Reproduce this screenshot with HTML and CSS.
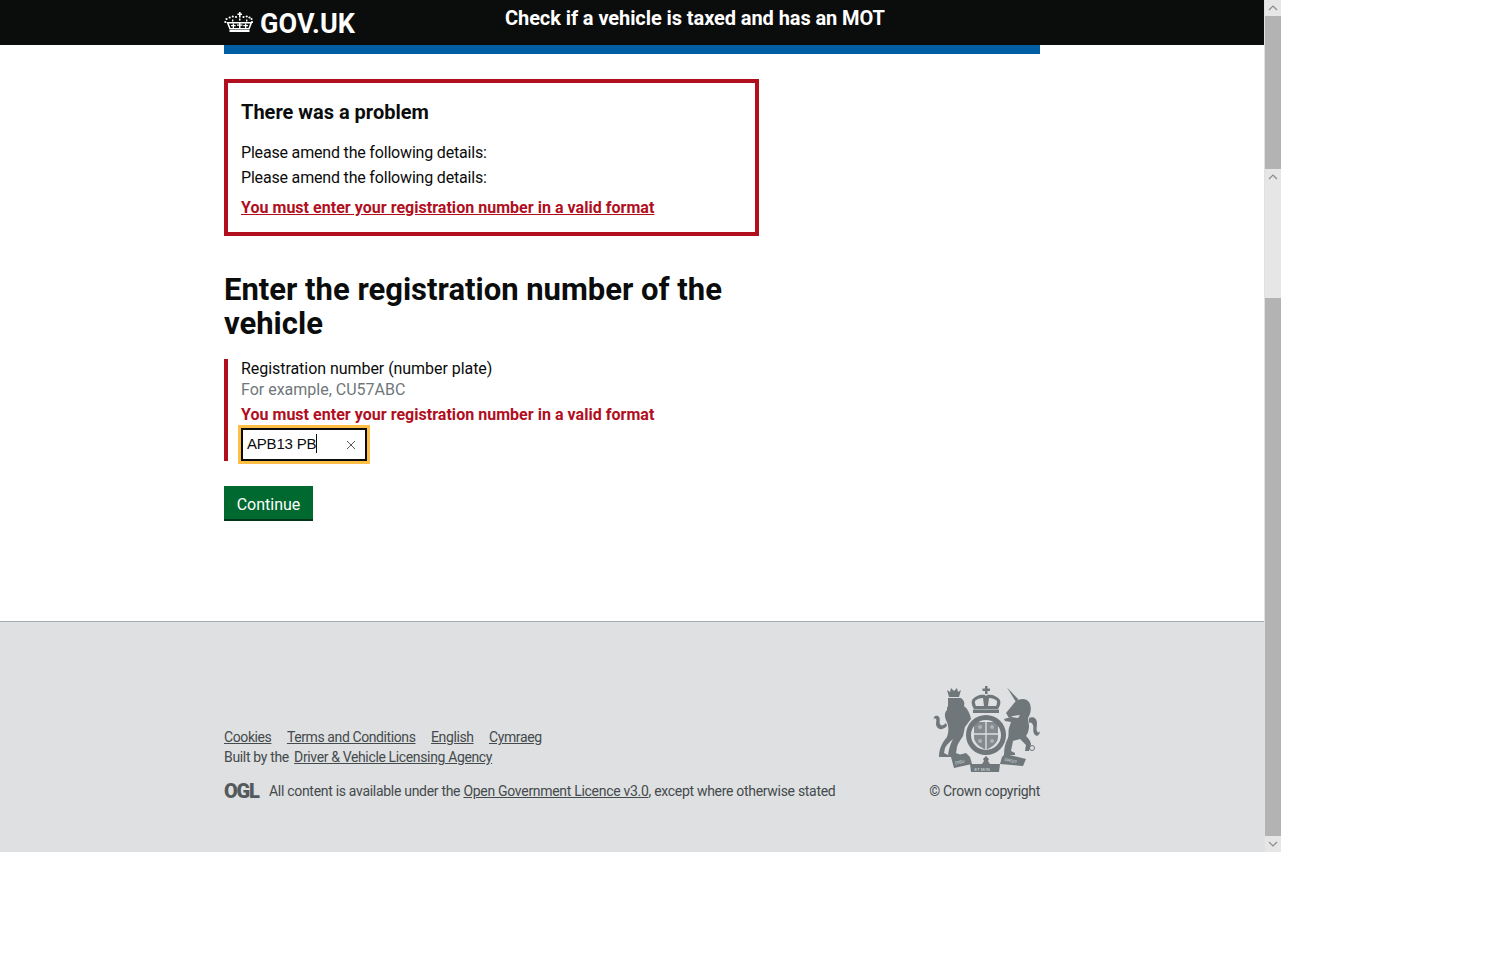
FILE: index.html
```html
<!DOCTYPE html>
<html lang="en">
<head>
<meta charset="utf-8">
<title>Check if a vehicle is taxed and has an MOT</title>
<link rel="stylesheet" href="styles.css">
</head>
<body>
<div class="window">
  <div class="page">
    <header class="site-header">
      <div class="container header-inner">
        <a class="logo" href="#">
          <svg class="crown" viewBox="0 0 29 20" aria-hidden="true">
            <g fill="#fff">
              <path d="M15 0h1.600v1.500H18v1.500h-1.400v2.500H15V3h-1.500V1.500H15z"/>
              <circle cx="12" cy="5" r="1.100"/><circle cx="19.500" cy="5" r="1.100"/>
              <circle cx="8.800" cy="4.500" r="1.100"/><circle cx="22.700" cy="4.500" r="1.100"/>
              <circle cx="5.700" cy="5.500" r="1.100"/><circle cx="25.500" cy="5.500" r="1.100"/>
              <circle cx="2.500" cy="7" r="1.100"/><circle cx="27.500" cy="7" r="1.100"/>
              <circle cx="1.300" cy="10" r="1.100"/><circle cx="28" cy="10" r="1.100"/>
              <path d="M15 6.500h1.500v2h-1.500zM8 7.500h1.400v2H8zM22 7.500h1.400v2H22z"/>
              <path d="M2.500 10h26l-3 7.500H5.500zM4.800 11.400l1.700 4.700h18l1.700-4.700z" fill-rule="evenodd"/>
              <path d="M15 10.500h1.500v2h2v1.300h-2v3h-1.500v-3h-2v-1.300h2zM8.700 11.500h1.300v1.500h1.700v1.200H10v2.500H8.700v-2.500H7V13h1.700zM21 11.500h1.300V13H24v1.200h-1.700v2.500H21v-2.500h-1.700V13H21z"/>
              <path d="M5.500 18h20v2h-20z"/>
            </g>
          </svg>
          <span class="logo-text">GOV.UK</span>
        </a>
        <span class="service-name">Check if a vehicle is taxed and has an MOT</span>
      </div>
    </header>
    <main class="container main">
      <div class="blue-bar"></div>
      <section class="error-summary">
        <h2 class="error-title">There was a problem</h2>
        <p class="error-line">Please amend the following details:</p>
        <p class="error-line">Please amend the following details:</p>
        <a class="error-link" href="#">You must enter your registration number in a valid format</a>
      </section>
      <h1 class="page-title">Enter the registration number of the vehicle</h1>
      <div class="form-group">
        <div class="label">Registration number (number plate)</div>
        <div class="hint">For example, CU57ABC</div>
        <div class="error-message">You must enter your registration number in a valid format</div>
        <div class="input">
          <span class="input-value">APB13 PB</span><span class="caret"></span>
          <svg class="clear" viewBox="0 0 10 10" aria-hidden="true"><path d="M1 1l8 8M9 1l-8 8" stroke="#54595c" stroke-width="1" fill="none"/></svg>
        </div>
      </div>
      <button class="button" type="button">Continue</button>
    </main>
    <footer class="site-footer">
      <div class="container footer-inner">
        <div class="footer-meta">
          <ul class="footer-links">
            <li><a href="#">Cookies</a></li>
            <li><a href="#">Terms and Conditions</a></li>
            <li><a href="#">English</a></li>
            <li><a href="#">Cymraeg</a></li>
          </ul>
          <div class="built-by">Built by the <a href="#">Driver &amp; Vehicle Licensing Agency</a></div>
          <div class="licence">
            <span class="ogl">OGL</span>
            <span>All content is available under the <a href="#">Open Government Licence v3.0</a>, except where otherwise stated</span>
          </div>
        </div>
        <div class="copyright">
          <svg class="crest" viewBox="0 0 107 90" aria-hidden="true">
            <g class="crest-fill">
              <path d="M52 1h2.500v2.500H57V6h-2.500v3H52V6h-2.500V3.500H52z"/>
              <path fill-rule="evenodd" d="M39 15c3-4 8-6 13-5l1 1 1-1c5-1 10 1 13 5 1 3 0 6-2 9H41c-2-3-3-6-2-9zm3 1c0 2 0 3 1 5h8l-1-8c-3 0-6 1-8 3zm14-3l-1 8h8c1-2 1-3 1-5-2-2-5-3-8-3z"/>
              <path d="M40 24.500h26V28H40z"/>
              <path d="M16 12l-2-7 3 2 1-4 3 3 3-3 1 4 3-2-2 7z"/>
              <path d="M15 13h13c3 2 4 5 3 8 4 3 6 8 7 13l-6 8-2 9c-3 5-5 7-6 11l-1 6 5 2v2H15c0-6 2-12 5-18-3 3-6 5-8 9l-1 5 4 2v2H6c0-8 3-14 8-20 2-6 2-11-1-17-2-5-1-8 1-10 0-2 0-3 1-4z"/>
              <path d="M14 41c-4 4-8 4-10 1-2-3 0-6-1-8-1-1-2-1-2 1-1-4 2-5 4-4 3 2 1 6 2 8 1 2 3 2 6-1z"/>
              <path d="M74 2.500l11.500 12-2.500 2.500z"/>
              <path fill-rule="evenodd" d="M82 17c5-4 11-4 14 0 3 5 2 11-1 16l1 8c0 4-1 7-3 10 2 2 4 4 5 8l-2 7h-4l1-6-6-6-7 2-2 10 4 2v2H71c0-6 1-12 4-17 1-4 0-7 1-10l2-6-6-1-1-2 7-2 7 1 2-3-7 1-4 2-3-5z"/>
              <path d="M96 33c5-2 8 1 8 5s-1 6 0 8 2 2 3 0c0 4-3 6-5 4-3-3-1-7-2-10-1-2-2-3-4-2z"/>
            </g>
            <circle class="crest-line" cx="99" cy="63" r="2.500"/>
            <circle class="crest-bg" cx="53" cy="50" r="21"/>
            <g class="crest-fill">
              <path fill-rule="evenodd" d="M53 30a20 20 0 1 1 0 40 20 20 0 0 1 0-40zm0 5a15 15 0 1 0 0 30 15 15 0 0 0 0-30z"/>
              <path d="M41 37h24v15c0 6-6 10-12 13-6-3-12-7-12-13z" opacity=".82"/>
            </g>
            <path class="crest-cut" d="M53 37v28M41 49h24"/>
            <path class="crest-cut thin" d="M47 42h.1M59 42h.1M47 56h.1M59 56h.1"/>
            <g class="crest-fill">
              <path d="M53 71l3 3-1 2 2 3-1 2h-6l-1-2 2-3-1-2z"/>
              <path d="M18 72l15-4 4 4 2 7-18 4z"/>
              <path d="M37 79h30l-1 8H38z"/>
              <path d="M67 79l2-7 3-3 21 5-3 7z"/>
            </g>
            <g class="motto">
              <text x="22.500" y="79.500" transform="rotate(-14 22.500 79.500)">DIEU</text>
              <text x="41.500" y="85.500">ET MON</text>
              <text x="71.500" y="75.500" transform="rotate(14 71.500 75.500)">DROIT</text>
            </g>
          </svg>
          <span class="copyright-text">© Crown copyright</span>
        </div>
      </div>
    </footer>
  </div>
  <div class="scrollbars">
    <div class="sb-button sb-up"><svg viewBox="0 0 10 6"><path d="M1 5l4-4 4 4" fill="none" stroke="#8a8a8a" stroke-width="1.200"/></svg></div>
    <div class="sb-thumb sb-thumb-top"></div>
    <div class="sb-button sb-up"><svg viewBox="0 0 10 6"><path d="M1 5l4-4 4 4" fill="none" stroke="#8a8a8a" stroke-width="1.200"/></svg></div>
    <div class="sb-track"></div>
    <div class="sb-thumb sb-thumb-main"></div>
    <div class="sb-button sb-down"><svg viewBox="0 0 10 6"><path d="M1 1l4 4 4-4" fill="none" stroke="#8a8a8a" stroke-width="1.200"/></svg></div>
  </div>
</div>
</body>
</html>
```
FILE: styles.css
```css
* { box-sizing: border-box; }
html, body { margin: 0; padding: 0; background: #fff; }
body {
  font-family: Roboto, "Liberation Sans", sans-serif;
  color: #0b0c0c;
  height: 973px;
  overflow: hidden;
}
a { color: inherit; }
.window { display: flex; width: 1281px; height: 852px; }
.page { width: 1264px; height: 852px; display: flex; flex-direction: column; }
.container { width: 816px; margin: 0 auto; }

.site-header { height: 45px; background: #0b0c0c; flex: none; }
.header-inner { display: flex; height: 45px; }
.logo { display: flex; align-items: center; color: #fff; text-decoration: none; width: 281px; flex: none; height: 45px; }
.crown { width: 29px; height: 20px; flex: none; margin-bottom: 2px; }
.logo-text { font-size: 27px; font-weight: 700; margin-left: 7px; letter-spacing: 0.15px; line-height: 45px; padding-top: 2px; height: 45px; }
.service-name { color: #fff; font-size: 20px; font-weight: 700; line-height: 36px; letter-spacing: -0.08px; white-space: nowrap; }

.main { flex: 1; }
.blue-bar { height: 9px; background: #005ea5; }
.error-summary { width: 535px; height: 157px; margin-top: 25px; border: 4px solid #b10e1e; padding: 14px 13px 0; }
.error-title { margin: 0 0 13px; font-size: 20px; line-height: 30px; font-weight: 700; }
.error-line { margin: 0; font-size: 16px; line-height: 25px; letter-spacing: -0.18px; }
.error-link { display: block; margin-top: 5px; color: #b10e1e; font-size: 16px; font-weight: 700; line-height: 25px; letter-spacing: 0.03px; }

.page-title { margin: 37px 0 0; width: 535px; font-size: 31px; line-height: 34px; font-weight: 700; }
.form-group { display: flow-root; margin-top: 18px; border-left: 4px solid #b10e1e; padding-left: 13px; height: 102px; }
.label { font-size: 16px; line-height: 21px; letter-spacing: -0.05px; margin-top: -1px; }
.hint { font-size: 16px; line-height: 21px; color: #6f777b; }
.error-message { font-size: 16px; font-weight: 700; line-height: 25px; color: #b10e1e; margin-top: 2px; letter-spacing: 0.03px; }
.input {
  width: 126px; height: 33px; margin-top: 1px;
  border: 2px solid #0b0c0c; outline: 3px solid #ffbf47;
  display: flex; align-items: center; padding: 0 0 2px 4px; background: #fff;
  font-size: 15px; letter-spacing: -0.2px; font-family: "Liberation Sans", Arial, sans-serif;
}
.caret { width: 1px; height: 19px; background: #0b0c0c; flex: none; }
.clear { width: 10px; height: 10px; margin: 2px 9px 0 auto; flex: none; }
.button {
  display: block; margin-top: 25px; width: 89px; height: 35px; border: 0; padding: 2px 0 0;
  background: #00692f; box-shadow: inset 0 -2px 0 #003618; color: #fff;
  font-family: inherit; font-size: 16px; line-height: 33px;
}

.site-footer { height: 231px; flex: none; background: #dee0e2; border-top: 1px solid #a1acb2; color: #454a4c; font-size: 14px; line-height: 20px; letter-spacing: -0.3px; }
.footer-inner { display: flex; justify-content: space-between; align-items: flex-end; height: 179px; }
.footer-meta { display: flex; flex-direction: column; }
.footer-links { list-style: none; margin: 0; padding: 0; display: flex; gap: 15.500px; letter-spacing: -0.4px; }
.built-by { letter-spacing: -0.33px; }
.built-by a { margin-left: 2px; letter-spacing: -0.36px; }
.licence { display: flex; align-items: center; margin-top: 14px; height: 20px; }
.ogl { width: 45px; flex: none; font-size: 20px; font-weight: 900; letter-spacing: -1.200px; color: #54595c; line-height: 20px; }
.copyright { display: flex; flex-direction: column; align-items: flex-end; }
.crest { width: 107px; height: 90px; display: block; }
.crest-fill { fill: #6f777b; }
.crest-bg { fill: #dee0e2; }
.crest-line { fill: none; stroke: #6f777b; stroke-width: 1; }
.crest-cut { fill: none; stroke: #dee0e2; stroke-width: 1.300; }
.crest-cut.thin { stroke-width: 4; stroke-linecap: round; opacity: .45; }
.copyright-text { display: block; margin-top: 6px; }
.motto text { font-size: 4px; fill: #dee0e2; font-family: "Liberation Sans", sans-serif; letter-spacing: 0; }

.scrollbars { width: 17px; height: 852px; flex: none; display: flex; flex-direction: column; background: #e6e6e6; border-left: 1px solid #e0e1e2; }
.sb-button { height: 16px; flex: none; display: flex; align-items: center; justify-content: center; background: #e6e6e6; }
.sb-button svg { width: 10px; height: 6px; display: block; }
.sb-thumb { background: #b3b3b3; flex: none; }
.sb-thumb-top { height: 153px; }
.sb-track { height: 113px; flex: none; }
.sb-thumb-main { height: 538px; }
```
